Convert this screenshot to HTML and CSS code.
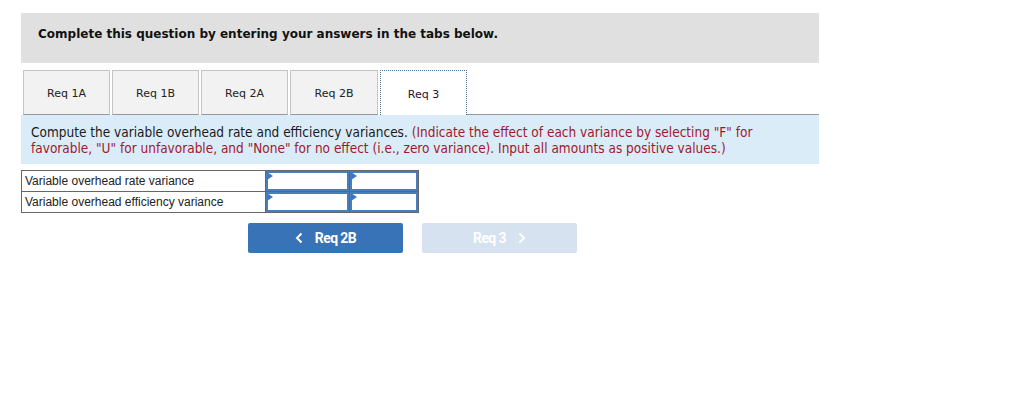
FILE: index.html
```html
<!DOCTYPE html>
<html>
<head>
<meta charset="utf-8">
<link rel="stylesheet" href="styles.css">
</head>
<body>
<div class="wrap">
  <div class="header">Complete this question by entering your answers in the tabs below.</div>
  <div class="tabs">
    <div class="tab">Req 1A</div>
    <div class="tab">Req 1B</div>
    <div class="tab">Req 2A</div>
    <div class="tab">Req 2B</div>
    <div class="tab active">Req 3</div>
    <div class="tab-fill"></div>
  </div>
  <div class="info">Compute the variable overhead rate and efficiency variances. <span class="red">(Indicate the effect of each variance by selecting "F" for favorable, "U" for unfavorable, and "None" for no effect (i.e., zero variance). Input all amounts as positive values.)</span></div>
  <table class="grid">
    <tr>
      <td class="label">Variable overhead rate variance</td>
      <td class="inp w1"><span class="flag"></span></td>
      <td class="inp w2"><span class="flag"></span></td>
    </tr>
    <tr>
      <td class="label">Variable overhead efficiency variance</td>
      <td class="inp w1"><span class="flag"></span></td>
      <td class="inp w2"><span class="flag"></span></td>
    </tr>
  </table>
  <div class="nav">
    <div class="btn prev">
      <svg width="8" height="12" viewBox="0 0 8 12"><path d="M6.5 1.5 L2 6 L6.5 10.5" fill="none" stroke="#fff" stroke-width="2"/></svg>
      <span>Req 2B</span>
    </div>
    <div class="btn next">
      <span>Req 3</span>
      <svg width="8" height="12" viewBox="0 0 8 12"><path d="M1.5 1.5 L6 6 L1.5 10.5" fill="none" stroke="#fff" stroke-width="2"/></svg>
    </div>
  </div>
</div>
</body>
</html>
```
FILE: styles.css
```css
html, body { margin: 0; padding: 0; background: #fff; }
body { padding: 13px 0 0 21px; }
.wrap { width: 798px; }
.header {
  background: #e0e0e0;
  height: 50px;
  box-sizing: border-box;
  padding: 14px 0 0 17px;
  font-family: "DejaVu Sans", Verdana, sans-serif;
  font-weight: bold;
  font-size: 12px;
  color: #111;
}
.tabs {
  display: flex;
  margin-top: 7px;
  padding-left: 2px;
  height: 45px;
}
.tab {
  width: 87px;
  height: 45px;
  box-sizing: border-box;
  margin-right: 2px;
  background: #f2f2f2;
  border: 1px solid #c4c4c4;
  border-bottom: 1px solid #999;
  font-family: "DejaVu Sans", Verdana, sans-serif;
  font-size: 11px;
  color: #222;
  display: flex;
  align-items: center;
  justify-content: center;
  padding-top: 2px;
}
.tab:nth-child(4) { width: 88px; margin-right: 2px; }
.tab.active {
  background: #fff;
  border: 1px dotted #4a6f9a;
  border-bottom: none;
  width: 87px;
  margin-right: 0;
  color: #301030;
}
.tab-fill { flex: 1; border-bottom: 1px solid #999; }
.info {
  background: #dbecf9;
  height: 49px;
  box-sizing: border-box;
  padding: 9px 10px 0 10px;
  font-family: "DejaVu Sans Condensed", "DejaVu Sans", sans-serif;
  font-stretch: condensed;
  font-size: 13.5px;
  line-height: 16px;
  color: #1a1a1a;
}
.red { color: #a0182a; }
.grid {
  border-collapse: collapse;
  margin-top: 6px;
  font-family: "Liberation Sans", Arial, sans-serif;
  font-size: 12px;
  color: #222;
}
.grid td { border: 1px solid #666; height: 20px; padding: 0; }
.grid td.label { width: 240px; padding-left: 3px; padding-top: 0; }
.grid td.inp {
  position: relative;
  box-shadow: inset 0 0 0 2px #4a7ebb;
}
.grid td.w1 { width: 83px; }
.grid td.w2 { width: 68px; }
.flag {
  position: absolute;
  left: 1px; top: 1px;
  width: 0; height: 0;
  border-top: 4px solid transparent;
  border-bottom: 4px solid transparent;
  border-left: 6px solid #3e78c4;
}
.nav {
  display: flex;
  gap: 19px;
  margin-top: 10px;
  padding-left: 227px;
}
.btn {
  width: 155px;
  height: 30px;
  box-sizing: border-box;
  border-radius: 2px;
  display: flex;
  align-items: center;
  justify-content: center;
  gap: 12px;
  font-family: Roboto, "Liberation Sans", sans-serif;
  font-weight: bold;
  font-size: 14px;
  letter-spacing: -0.6px;
  color: #fff;
}
.btn.prev { background: #3873b8; }
.btn.next { background: #d6e2f0; color: #fff; }
```
